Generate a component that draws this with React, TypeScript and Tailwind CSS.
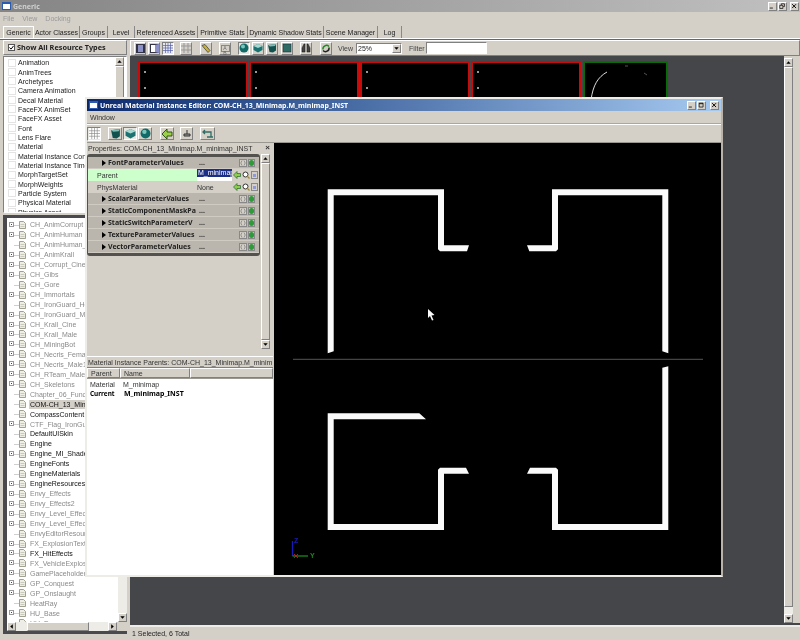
import type { ReactNode } from "react";

const resourceTypes = [
  "Animation",
  "AnimTrees",
  "Archetypes",
  "Camera Animation",
  "Decal Material",
  "FaceFX AnimSet",
  "FaceFX Asset",
  "Font",
  "Lens Flare",
  "Material",
  "Material Instance Constant",
  "Material Instance TimeVarying",
  "MorphTargetSet",
  "MorphWeights",
  "Particle System",
  "Physical Material",
  "Physics Asset",
];

// name, expander, loaded
const packages: [string, boolean, boolean][] = [
  ["CH_AnimCorrupt", true, false],
  ["CH_AnimHuman", true, false],
  ["CH_AnimHuman_Test", false, false],
  ["CH_AnimKrall", true, false],
  ["CH_Corrupt_Cine", true, false],
  ["CH_Gibs", true, false],
  ["CH_Gore", false, false],
  ["CH_Immortals", true, false],
  ["CH_IronGuard_Head", false, false],
  ["CH_IronGuard_Male", true, false],
  ["CH_Krall_Cine", true, false],
  ["CH_Krall_Male", true, false],
  ["CH_MiningBot", true, false],
  ["CH_Necris_Female", true, false],
  ["CH_Necris_Male1", true, false],
  ["CH_RTeam_Male", true, false],
  ["CH_Skeletons", true, false],
  ["Chapter_06_Functions", false, false],
  ["COM-CH_13_Minimap", false, true],
  ["CompassContent", false, true],
  ["CTF_Flag_IronGuard", true, false],
  ["DefaultUISkin", false, true],
  ["Engine", false, true],
  ["Engine_MI_Shaders", true, true],
  ["EngineFonts", false, true],
  ["EngineMaterials", false, true],
  ["EngineResources", true, true],
  ["Envy_Effects", true, false],
  ["Envy_Effects2", true, false],
  ["Envy_Level_Effects", true, false],
  ["Envy_Level_Effects2", true, false],
  ["EnvyEditorResources", false, false],
  ["FX_ExplosionTextures", true, false],
  ["FX_HitEffects", true, true],
  ["FX_VehicleExplosions", true, false],
  ["GamePlaceholders", true, false],
  ["GP_Conquest", true, false],
  ["GP_Onslaught", true, false],
  ["HeatRay", false, false],
  ["HU_Base", true, false],
  ["HU_Deco", false, false],
];

const tabs: [string, string][] = [
  ["Generic", "w-[31px]"],
  ["Actor Classes", "w-[46px]"],
  ["Groups", "w-[28px]"],
  ["Level", "w-[27px]"],
  ["Referenced Assets", "w-[63px]"],
  ["Primitive Stats", "w-[50px]"],
  ["Dynamic Shadow Stats", "w-[76px]"],
  ["Scene Manager", "w-[54px]"],
  ["Log", "w-[24px]"],
];

const bevelUp = "border border-t-white border-l-white border-r-[#808080] border-b-[#808080]";
const bevelIn = "border border-t-[#808080] border-l-[#808080] border-r-white border-b-white";
const boldFont = "font-bold font-['Noto_Sans']";

const WinIcon = () => (
  <div className="w-[9px] h-[8px] bg-white border border-[#2a5bb0] border-t-2 shrink-0" />
);

const CaptionBtn = ({ kind }: { kind: "min" | "max" | "restore" | "close" }) => (
  <div className={`w-[9px] h-[9px] bg-[#d4d0c8] ${bevelUp} shrink-0`}>
    <svg viewBox="0 0 9 9" className="w-[7px] h-[7px]">
      {kind === "min" && <path d="M1 6.5h4" stroke="#000" strokeWidth="1" />}
      {kind === "max" && <path d="M1.5 1.5h5v5h-5zM1.5 2.2h5" stroke="#000" strokeWidth="0.9" fill="none" />}
      {kind === "restore" && <path d="M3 2.5V1h4v3.5H5.500M1 3h4v4H1z" stroke="#000" strokeWidth="0.9" fill="none" />}
      {kind === "close" && <path d="M1.500 1.500l5 5M6.500 1.500l-5 5" stroke="#000" strokeWidth="1.200" />}
    </svg>
  </div>
);

const ScrollBtn = ({ dir }: { dir: "up" | "down" | "left" | "right" }) => {
  const pts = {
    up: "4,2.500 1.500,5.500 6.500,5.500",
    down: "1.500,2.500 6.500,2.500 4,5.500",
    left: "2.500,4 5.500,1.500 5.500,6.500",
    right: "2.500,1.500 5.500,4 2.500,6.500",
  }[dir];
  return (
    <div className={`w-[9px] h-[9px] bg-[#d4d0c8] ${bevelUp} shrink-0`}>
      <svg viewBox="0 0 8 8" className="w-[7px] h-[7px]">
        <polygon points={pts} fill="#000" />
      </svg>
    </div>
  );
};

const VScroll = ({ thumbH }: { thumbH: string }) => (
  <div className="w-[9px] h-full flex flex-col bg-[#eeece6] shrink-0">
    <ScrollBtn dir="up" />
    <div className={`${thumbH} bg-[#d4d0c8] ${bevelUp}`} />
    <div className="flex-1" />
    <ScrollBtn dir="down" />
  </div>
);

// flat toolbar button holding a small glyph
const Tool = ({
  children,
  pressed,
  ml,
  w,
}: {
  children: ReactNode;
  pressed?: boolean;
  ml?: string;
  w?: string;
}) => (
  <div
    className={`${w ?? "w-[12px]"} h-[13px] flex items-center justify-center shrink-0 ${ml ?? ""} ${
      pressed ? `bg-[#e8e6e0] ${bevelIn}` : bevelUp
    }`}
  >
    {children}
  </div>
);

const Shape = ({ kind, size }: { kind: "sphere" | "cyl" | "cube" | "plane"; size?: string }) => (
  <svg viewBox="0 0 10 10" className={size ?? "w-[10px] h-[10px]"}>
    {kind === "sphere" && (
      <>
        <circle cx="5" cy="5" r="4.500" fill="#0f6a68" />
        <circle cx="4" cy="3.500" r="2" fill="#7fc4bb" />
      </>
    )}
    {kind === "cyl" && (
      <>
        <path d="M1 2l8-1v6.500l-3 2-3.500-.5z" fill="#13514f" />
        <path d="M1 2l8-1-1 2-5 .5z" fill="#7fbdb6" />
      </>
    )}
    {kind === "cube" && (
      <>
        <path d="M5 1l4.500 2v4L5 9.500 .5 7V3z" fill="#1a7370" />
        <path d="M5 1l4.500 2L5 5 .5 3z" fill="#a8d8d2" />
      </>
    )}
    {kind === "plane" && <rect x="1" y="1" width="8" height="8" fill="#2f6c63" stroke="#123" strokeWidth=".5" />}
  </svg>
);

const GridGlyph = ({ className }: { className: string }) => (
  <svg viewBox="0 0 10 10" className={className}>
    <rect x="0" y="0" width="10" height="10" fill="#e8e8f4" />
    <path d="M0 2.500h10M0 5h10M0 7.500h10M2.500 0v10M5 0v10M7.500 0v10" stroke="#5560a8" strokeWidth=".7" />
  </svg>
);

const BackArrow = () => (
  <svg viewBox="0 0 12 12" className="w-[12px] h-[12px]">
    <path d="M1 6l5-5v3h5v4H6v3z" fill="#9ad04a" stroke="#24470a" strokeWidth=".9" />
  </svg>
);

const ResourceRow = ({ name }: { name: string }) => (
  <div className="h-[9.35px] flex items-center shrink-0">
    <div className="w-[8px] h-[8px] ml-[1px] border border-[#e4e4e4] bg-white shrink-0" />
    <span className="ml-[2px] whitespace-nowrap">{name}</span>
  </div>
);

const PackageRow = ({ name, expander, loaded }: { name: string; expander: boolean; loaded: boolean }) => {
  const selected = name.startsWith("COM-");
  return (
    <div className="h-[9.96px] flex items-center shrink-0 relative">
      {expander && (
        <div className="absolute left-[1px] top-[2px] w-[5px] h-[5px] border border-[#9a9a9a] bg-[#444] bg-clip-content p-[1px]" />
      )}
      <div className="absolute left-[6px] top-[5px] w-[5px] border-t border-[#cfcfcf]" />
      <svg viewBox="0 0 7 8" className="absolute left-[11px] top-[1px] w-[7px] h-[8px]">
        <path d="M.5.500h4l2 2v5h-6z" fill="#f0efe6" stroke="#8a8a78" strokeWidth=".8" />
        <path d="M1.500 3.500h4M1.500 5.500h4" stroke="#b0b0a0" strokeWidth=".6" />
      </svg>
      <span
        className={`ml-[21px] pl-[1px] whitespace-nowrap ${loaded ? "text-[#111]" : "text-[#8a8a8a]"} ${
          selected ? "bg-[#d4d0c8] w-[60px] overflow-hidden" : ""
        }`}
      >
        {name}
      </span>
    </div>
  );
};

const PropButtons = ({ arrow }: { arrow?: boolean }) =>
  arrow ? (
    <div className="flex items-center gap-[1px] shrink-0">
      <svg viewBox="0 0 8 8" className="w-[8px] h-[8px]">
        <path d="M.5 4l3.500-3.500v2h3.500v3H4v2z" fill="#8fcc4a" stroke="#263" strokeWidth=".7" />
      </svg>
      <svg viewBox="0 0 8 8" className="w-[8px] h-[8px]">
        <circle cx="3.500" cy="3.500" r="2.500" fill="#fff" stroke="#333" />
        <path d="M5 5l2.500 2.500" stroke="#a68a1a" strokeWidth="1.200" />
      </svg>
      <div className="w-[7px] h-[8px] bg-[#d4d0c8] border border-[#888] flex items-center justify-center">
        <div className="w-[3px] h-[3px] bg-[#8f9ad8]" />
      </div>
    </div>
  ) : (
    <div className="flex items-center gap-[1px] shrink-0 ml-[9px]">
      <div className="w-[8px] h-[8px] bg-[#d4d0c8] border border-[#888]">
        <svg viewBox="0 0 6 6" className="w-[6px] h-[6px]">
          <path d="M2 .5L.8 3 2 5.500M4 .5L5.200 3 4 5.500" stroke="#777" strokeWidth=".7" fill="none" />
        </svg>
      </div>
      <div className="w-[7px] h-[8px] bg-[#d4d0c8] border border-[#888] flex items-center justify-center">
        <div className="w-[6px] h-[6px] rounded-full bg-[#2f9a3a]" />
      </div>
    </div>
  );

const CategoryRow = ({ label }: { label: string }) => (
  <div className="h-[12px] flex items-center bg-[#bab6ad] pl-[14px] pr-[3px] border-b border-[#cfcbc2]">
    <div className="w-0 h-0 border-y-[3px] border-y-transparent border-l-[4px] border-l-black shrink-0" />
    <span className={`ml-[2px] w-[89px] overflow-hidden whitespace-nowrap ${boldFont}`}>{label}</span>
    <span className={`ml-[2px] w-[31px] ${boldFont}`}>...</span>
    <PropButtons />
  </div>
);

const Thumb = ({ green }: { green?: boolean }) => (
  <div
    className={`h-[120px] shrink-0 bg-black border-2 relative ${
      green ? "w-[85px] border-[#0a6a0a]" : "w-[110px] border-[#c80a0a]"
    }`}
  >
    {!green && (
      <>
        <div className="absolute left-[4px] top-[8px] w-[2px] h-[2px] bg-[#999]" />
        <div className="absolute left-[4px] top-[24px] w-[2px] h-[2px] bg-[#999]" />
      </>
    )}
    {green && (
      <svg viewBox="0 0 81 40" className="absolute left-0 top-0 w-[81px] h-[40px]">
        <path d="M6 37C8 22 13 14 22 9" stroke="#ddd" strokeWidth="1" fill="none" />
        <path d="M40 3h3M59 10l3 2" stroke="#777" strokeWidth=".7" />
      </svg>
    )}
  </div>
);

const MinimapWires = () => (
  <svg viewBox="274 143 447 432" className="absolute inset-0 w-full h-full">
    <path d="M293 359.300H703" stroke="#555" strokeWidth="1" />
    <g fill="#fafafa">
      <polygon points="327.700,189.300 444,189.300 444,245.300 469,245.300 467,251.300 440,251.300 438,249.300 438,195.300 333.700,195.300 333.700,351.300 327.700,353.300" />
      <polygon points="668.300,189.300 552,189.300 552,245.300 527,245.300 529.300,251.300 556,251.300 558,249.300 558,195.300 662.300,195.300 662.300,351.300 668.300,353.300" />
      <polygon points="327.700,413.300 419.300,413.300 426,419.300 333.700,419.300 333.700,524 438,524 438,469.700 440,467.700 466,467.700 469,473.700 444,473.700 444,530 327.700,530" />
      <polygon points="668.300,366.300 668.300,530 552,530 552,473.700 527,473.700 530,467.700 556,467.700 558,469.700 558,524 662.300,524 662.300,367.700" />
      <polygon points="428,309 434.500,315 431.500,315.500 433.500,320 432,320.500 430,316 428,318" />
    </g>
    {/* axis widget */}
    <path d="M292.500 541V556" stroke="#1a1ab8" strokeWidth="1.300" />
    <path d="M292.500 556H308" stroke="#1a8a1a" strokeWidth="1.300" />
    <path d="M294 554l4 4M298 554l-4 4" stroke="#c02020" strokeWidth=".9" />
    <text x="294" y="543" fontSize="7" fill="#1a1ab8" fontWeight="bold">Z</text>
    <text x="310" y="558" fontSize="7" fill="#1a8a1a" fontWeight="bold">Y</text>
  </svg>
);

const MaterialEditor = () => (
  <div className="absolute left-[85px] top-[97px] w-[638px] h-[480px] bg-[#d4d0c8] border-2 border-t-[#eeece6] border-l-[#eeece6] border-r-[#b8b4ac] border-b-[#eeece6] flex flex-col">
    {/* title */}
    <div className={`h-[12px] shrink-0 flex items-center px-[2px] gap-[2px] bg-gradient-to-r from-[#0b2a6e] to-[#a6caf0] text-white ${boldFont}`}>
      <WinIcon />
      <span className="whitespace-nowrap">Unreal Material Instance Editor: COM-CH_13_Minimap.M_minimap_INST</span>
      <div className="ml-auto flex gap-[1px]">
        <CaptionBtn kind="min" />
        <CaptionBtn kind="max" />
        <div className="w-[2px]" />
        <CaptionBtn kind="close" />
      </div>
    </div>
    <div className="h-[13px] shrink-0 flex items-center pl-[3px] text-[#333] border-b border-[#aaa7a0]">Window</div>
    {/* toolbar */}
    <div className="h-[18px] shrink-0 flex items-center border-t border-white">
      <div className={`w-[14px] h-[14px] flex items-center justify-center bg-[#e8e6e0] ${bevelIn}`}>
        <svg viewBox="0 0 10 10" className="w-[11px] h-[11px]">
          <rect width="10" height="10" fill="#fff" />
          <path d="M0 2.500h10M0 5h10M0 7.500h10M2.500 0v10M5 0v10M7.500 0v10" stroke="#888" strokeWidth=".6" />
        </svg>
      </div>
      <Tool w="w-[14px]" ml="ml-[7px]"><Shape kind="cyl" size="w-[11px] h-[11px]" /></Tool>
      <Tool w="w-[14px]" ml="ml-[1px]" pressed><Shape kind="cube" size="w-[11px] h-[11px]" /></Tool>
      <Tool w="w-[14px]" ml="ml-[1px]"><Shape kind="sphere" size="w-[11px] h-[11px]" /></Tool>
      <Tool w="w-[14px]" ml="ml-[8px]"><BackArrow /></Tool>
      <Tool w="w-[13px]" ml="ml-[6px]">
        <svg viewBox="0 0 10 10" className="w-[10px] h-[10px]">
          <path d="M5 1v4M2 5h6v2H2z" stroke="#333" strokeWidth="1" fill="#999" />
        </svg>
      </Tool>
      <Tool w="w-[15px]" ml="ml-[7px]">
        <svg viewBox="0 0 12 10" className="w-[12px] h-[10px]">
          <path d="M1 3h8v5M3 1L1 3l2 2M5 8h6" stroke="#2f6c63" strokeWidth="1.300" fill="none" />
        </svg>
      </Tool>
    </div>
    {/* body */}
    <div className="flex-1 flex min-h-0 border-t border-[#9a9790]">
      <div className="w-[186px] flex flex-col shrink-0">
        <div className="h-[10px] shrink-0 flex items-center justify-between pl-[1px] pr-[3px] text-[#333]">
          <span className="whitespace-nowrap">Properties: COM-CH_13_Minimap.M_minimap_INST</span>
          <span className="font-bold text-[8px] leading-none">×</span>
        </div>
        <div className="h-[198px] shrink-0 flex">
          <div className="flex-1 pt-[1px]">
            <div className="w-[173px] bg-[#d4d0c8] border-y-[3px] border-x border-[#53524e] rounded-[3px]">
              <CategoryRow label="FontParameterValues" />
              <div className="h-[12px] flex items-center bg-[#ccffcc]">
                <span className="pl-[9px] w-[109px] text-[#333]">Parent</span>
                <div className="w-[35px] h-full bg-white overflow-hidden">
                  <span className="block h-[8px] leading-[8px] bg-[#1c2f86] text-white whitespace-nowrap pl-[1px]">M_minimap</span>
                </div>
                <div className="flex-1 h-full bg-[#d4d0c8] flex items-center pl-[1px]"><PropButtons arrow /></div>
              </div>
              <div className="h-[12px] flex items-center bg-[#d4d0c8]">
                <span className="pl-[9px] w-[109px] text-[#333]">PhysMaterial</span>
                <span className="w-[35px] text-[#333]">None</span>
                <div className="pl-[1px]"><PropButtons arrow /></div>
              </div>
              <CategoryRow label="ScalarParameterValues" />
              <CategoryRow label="StaticComponentMaskPa" />
              <CategoryRow label="StaticSwitchParameterV" />
              <CategoryRow label="TextureParameterValues" />
              <CategoryRow label="VectorParameterValues" />
            </div>
          </div>
          <div className="mr-[3px] h-[195px] mt-[1px]">
            <VScroll thumbH="h-[178px]" />
          </div>
        </div>
        <div className="h-[6px] shrink-0 border-b border-white" />
        <div className="h-[10px] shrink-0 flex items-center justify-between pl-[1px] pr-[3px] text-[#333] overflow-hidden">
          <span className="whitespace-nowrap">Material Instance Parents: COM-CH_13_Minimap.M_minim</span>
          <span className="font-bold text-[8px] leading-none">×</span>
        </div>
        <div className="flex-1 bg-white flex flex-col border-t border-[#808080] text-[#333] min-h-0">
          <div className="h-[11px] shrink-0 flex bg-[#d4d0c8] border-b border-[#9a9790]">
            <div className={`w-[33px] pl-[3px] flex items-center ${bevelUp}`}>Parent</div>
            <div className={`w-[70px] pl-[3px] flex items-center ${bevelUp}`}>Name</div>
            <div className={`flex-1 ${bevelUp}`} />
          </div>
          <div className="h-[9px] flex items-center mt-[1px]">
            <span className="pl-[3px] w-[33px]">Material</span>
            <span className="pl-[3px]">M_minimap</span>
          </div>
          <div className={`h-[9px] flex items-center text-black ${boldFont}`}>
            <span className="pl-[3px] w-[33px] text-[6.400px]">Current</span>
            <span className="pl-[4px]">M_minimap_INST</span>
          </div>
        </div>
      </div>
      <div className="flex-1 bg-black relative ml-[1px]">
        <MinimapWires />
      </div>
    </div>
  </div>
);

export default function App() {
  return (
    <div className="relative w-[800px] h-[640px] overflow-hidden bg-[#d4d0c8] flex flex-col text-[7px] leading-[9px] text-[#222] font-['Liberation_Sans',sans-serif] blur-[0.35px]">
      {/* main title */}
      <div className="h-[12px] shrink-0 flex items-center pl-[2px] pr-[1px] gap-[2px] bg-gradient-to-r from-[#858585] to-[#c0c0c0] text-[#d0d0d0]">
        <WinIcon />
        <span className={boldFont}>Generic</span>
        <div className="ml-auto flex gap-[1px]">
          <CaptionBtn kind="min" />
          <CaptionBtn kind="restore" />
          <div className="w-[1px]" />
          <CaptionBtn kind="close" />
        </div>
      </div>
      <div className="h-[13px] shrink-0 flex items-center gap-[8px] pl-[3px] text-[#9a9a9a]">
        <span>File</span>
        <span>View</span>
        <span>Docking</span>
      </div>
      {/* tabs */}
      <div className="h-[13px] shrink-0 flex pl-[3px] items-end">
        {tabs.map(([label, w], i) => (
          <div
            key={label}
            className={`${w} h-[12px] flex items-center justify-center whitespace-nowrap border-r border-[#888] ${
              i === 0 ? "border-t border-l border-white" : ""
            }`}
          >
            {label}
          </div>
        ))}
      </div>
      <div className="h-[2px] shrink-0 bg-white border-b border-[#666]" />

      <div className="flex-1 flex min-h-0">
        {/* left column */}
        <div className="w-[130px] shrink-0 flex flex-col pl-[3px] pr-[3px] pb-[6px]">
          <div className={`h-[15px] shrink-0 flex items-center pl-[4px] gap-[2px] ${boldFont} ${bevelUp}`}>
            <div className="w-[7px] h-[7px] bg-white border border-[#555] flex items-center justify-center">
              <svg viewBox="0 0 6 6" className="w-[5px] h-[5px]">
                <path d="M.5 3l2 2L5.500 1" stroke="#000" strokeWidth="1.200" fill="none" />
              </svg>
            </div>
            <span className="text-[7.300px]">Show All Resource Types</span>
          </div>
          <div className={`h-[157px] shrink-0 mt-[1px] flex bg-white pl-[3px] pr-[2px] overflow-hidden ${bevelIn}`}>
            <div className="flex-1 flex flex-col overflow-hidden pt-[1px]">
              {resourceTypes.map((r) => (
                <ResourceRow key={r} name={r} />
              ))}
            </div>
            <VScroll thumbH="h-[60px]" />
          </div>
          <div className="h-[2px] shrink-0" />
          <div className="flex-1 min-h-0 flex flex-col border-t-[3px] border-l-[4px] border-b-[3px] border-[#4a4a4e]">
            <div className="flex-1 min-h-0 flex bg-white relative">
              <div className="flex-1 flex flex-col overflow-hidden pt-[2px] pl-[1px]">
                {packages.map(([n, e, l]) => (
                  <PackageRow key={n} name={n} expander={e} loaded={l} />
                ))}
              </div>
              <div className="w-[9px] flex flex-col justify-end bg-[#eeece6] shrink-0">
                <ScrollBtn dir="down" />
              </div>
            </div>
            <div className="h-[9px] shrink-0 flex bg-[#eeece6]">
              <ScrollBtn dir="left" />
              <div className={`w-[62px] ml-[11px] bg-[#d4d0c8] ${bevelUp}`} />
              <div className="flex-1" />
              <ScrollBtn dir="right" />
              <div className="w-[10px] bg-[#d4d0c8]" />
            </div>
          </div>
        </div>

        {/* right column */}
        <div className="flex-1 min-w-0 flex flex-col">
          <div className={`h-[16px] shrink-0 flex items-center pl-[3px] gap-[2px] ${bevelUp}`}>
            <Tool><div className="w-[9px] h-[9px] bg-[#8c92c8] border border-[#334] border-x-2" /></Tool>
            <Tool><div className="w-[9px] h-[9px] bg-white border border-[#334] border-r-[4px] border-r-[#8c92c8]" /></Tool>
            <Tool pressed><GridGlyph className="w-[10px] h-[10px]" /></Tool>
            <Tool ml="ml-[4px]">
              <svg viewBox="0 0 10 10" className="w-[10px] h-[10px]">
                <path d="M0 3h10M0 7h10M3 0v10M7 0v10" stroke="#999" />
              </svg>
            </Tool>
            <Tool ml="ml-[6px]">
              <svg viewBox="0 0 10 10" className="w-[11px] h-[11px]">
                <path d="M1 2l3-1 5 6-2 2z" fill="#c9b23a" stroke="#333" strokeWidth=".7" />
              </svg>
            </Tool>
            <Tool ml="ml-[5px]"><div className="w-[9px] h-[7px] border border-[#888] text-[5px] leading-[5px] text-[#666] text-center">A B</div></Tool>
            <Tool pressed ml="ml-[5px]"><Shape kind="sphere" /></Tool>
            <Tool><Shape kind="cube" /></Tool>
            <Tool><Shape kind="cyl" /></Tool>
            <Tool ml="ml-[1px]"><Shape kind="plane" /></Tool>
            <Tool ml="ml-[5px]">
              <svg viewBox="0 0 10 10" className="w-[10px] h-[10px]">
                <path d="M1 9V5l2-4h1v8zM9 9V5L7 1H6v8z" fill="#444" stroke="#111" strokeWidth=".5" />
              </svg>
            </Tool>
            <Tool ml="ml-[6px]">
              <svg viewBox="0 0 10 10" className="w-[11px] h-[11px]">
                <path d="M2 6a3.500 3.500 0 0 1 6-3" stroke="#1f8a1f" strokeWidth="1.400" fill="none" />
                <path d="M8 4a3.500 3.500 0 0 1-6 3" stroke="#222" strokeWidth="1.400" fill="none" />
              </svg>
            </Tool>
            <span className="ml-[4px] mr-[1px] text-[#444]">View</span>
            <div className={`w-[46px] h-[11px] flex items-center justify-between bg-white pl-[1px] ${bevelIn}`}>
              <span>25%</span>
              <ScrollBtn dir="down" />
            </div>
            <span className="ml-[5px] text-[#444]">Filter</span>
            <div className={`w-[61px] h-[12px] bg-white -ml-[1px] ${bevelIn}`} />
          </div>
          <div className="flex-1 min-h-0 bg-[#45464a] flex border-b-2 border-[#eeece6]">
            <div className="flex-1 min-w-0 flex gap-[1px] pt-[5px] pl-[8px] items-start overflow-hidden">
              <Thumb />
              <Thumb />
              <Thumb />
              <Thumb />
              <div className="w-0" />
              <Thumb green />
            </div>
            <div className="bg-[#d4d0c8] pr-[7px] pt-[2px] w-[16px] shrink-0 h-[567px]">
              <div className="h-full"><VScroll thumbH="h-[540px]" /></div>
            </div>
          </div>
          <div className="h-[13px] shrink-0 flex items-center pl-[2px] bg-[#d4d0c8]">1 Selected, 6 Total</div>
        </div>
      </div>

      <MaterialEditor />
    </div>
  );
}
